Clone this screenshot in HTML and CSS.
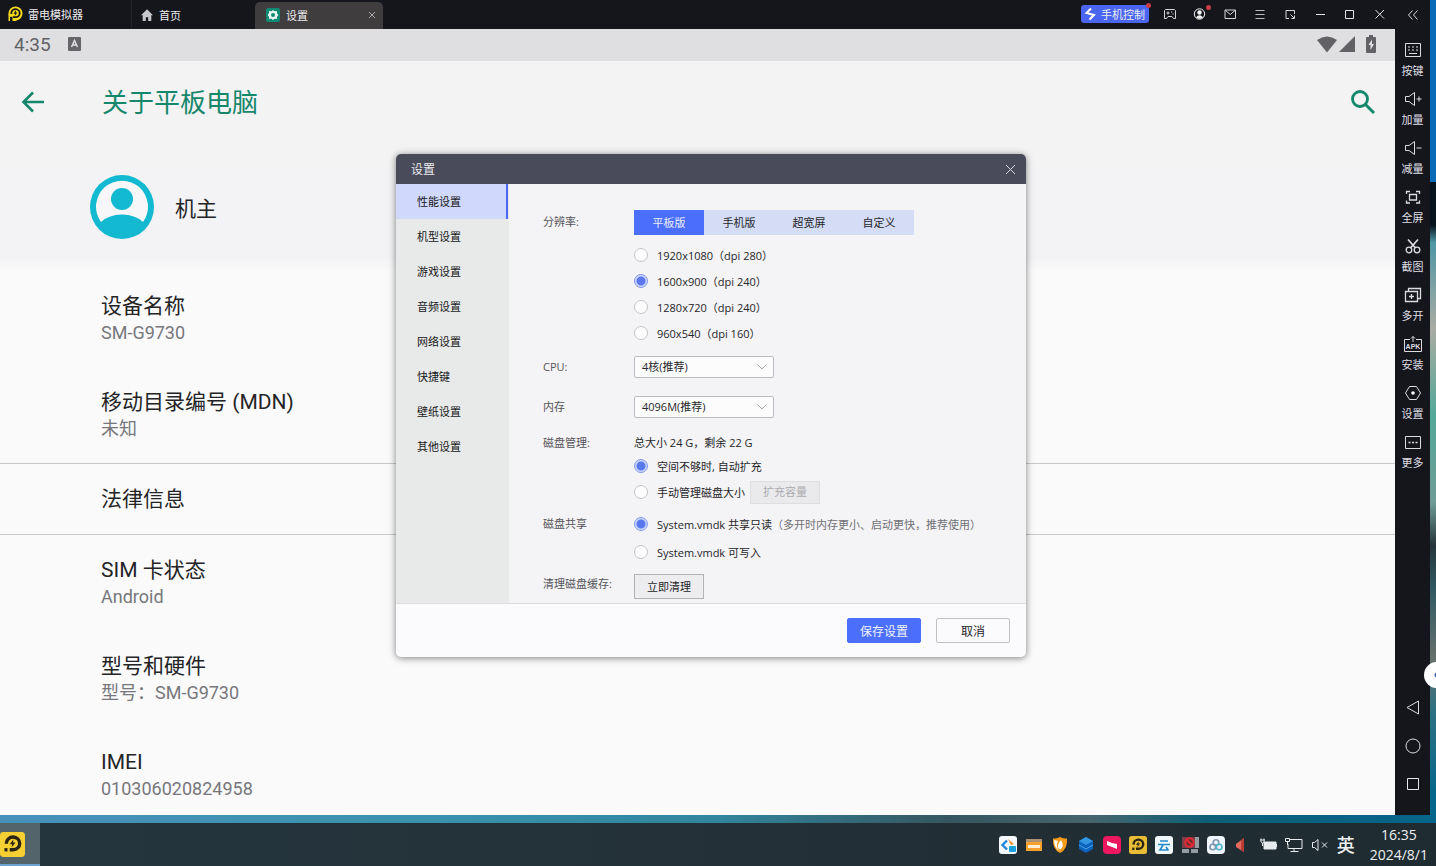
FILE: index.html
```html
<!DOCTYPE html>
<html lang="zh-CN">
<head>
<meta charset="utf-8">
<title>雷电模拟器</title>
<link rel="stylesheet" href="styles.css">
</head>
<body>
<svg class="defs" width="0" height="0" aria-hidden="true">
  <defs>
    <symbol id="ld" viewBox="0 0 18 18">
      <path d="M4.600 8.500V8A4.800 4.600 0 1 1 9.500 12.800H7" fill="none" stroke="currentColor" stroke-width="2.400"/>
      <path d="M9.700 5.300 7 8.800h1.800L8.300 11.200l2.900-3.600H9.400z" fill="currentColor"/>
      <path d="M3.200 11.600h2.200V14H3.200z" fill="currentColor"/>
    </symbol>
  </defs>
</svg>

<div class="desktop">
  <div class="emulator">
    <div class="main">
      <header class="titlebar">
        <div class="brand">
          <svg width="16" height="16" viewBox="0 0 16 16"><circle cx="8.500" cy="7.500" r="7" fill="#f7dc1c"/><path d="M1.500 8v7h8.500z" fill="#f7dc1c"/><path d="M4.300 8V7A4.200 4 0 1 1 8.600 11.200H6" fill="none" stroke="#17161d" stroke-width="1.800"/><path d="M9 4 6.500 7.700h1.700L7.500 10l3-3.400H8.800z" fill="#17161d"/><path d="M3 10.800h2.500V15H3z" fill="#17161d"/></svg>
          <span>雷电模拟器</span>
        </div>
        <button class="tab">
          <svg width="12" height="12" viewBox="0 0 12 12"><path d="M6 .3 0 6.300h1.700V12h3.100V8.300h2.400V12h3.100V6.300H12z" fill="#c5c5ca"/></svg>
          <span>首页</span>
        </button>
        <button class="tab tab-active">
          <svg width="14" height="14" viewBox="0 0 14 14"><rect width="14" height="14" rx="2" fill="#0f8b74"/><path d="M7 2 8.500 3.200l2.300-.1.300 2.200 1.200 1.700-1.200 1.700-.3 2.200-2.300-.1L7 12l-1.500-1.200-2.300.1-.3-2.200L1.700 7l1.200-1.700.3-2.200 2.300.1z" fill="#e9f5f2"/><circle cx="7" cy="7" r="2" fill="#0f8b74"/></svg>
          <span>设置</span>
          <svg class="tab-close" width="8" height="8" viewBox="0 0 8 8"><path d="M1 1l6 6M7 1 1 7" stroke="#aaa" fill="none"/></svg>
        </button>
        <div class="window-tools">
          <button class="phone-control">
            <svg width="13" height="14" viewBox="0 0 13 14"><path d="M7 1.500 2.500 6 10 8 5.500 12.500" fill="none" stroke="#fff" stroke-width="2"/></svg>
            <span>手机控制</span><i class="dot"></i>
          </button>
          <button class="tool" aria-label="手柄"><svg width="14" height="14" viewBox="0 0 14 14"><path d="M2.500 2.500h9l1 1v8h-2l-1.500-2h-4l-1.500 2h-2v-8zM3.500 6h3M5 4.500v3M8 5h1.200M9.500 7h1.200" fill="none" stroke="#d6d6da"/></svg></button>
          <button class="tool" aria-label="账号"><svg width="14" height="14" viewBox="0 0 14 14"><circle cx="6.500" cy="7" r="5.200" fill="none" stroke="#f4f4f4"/><circle cx="6.500" cy="5.500" r="2.200" fill="#f4f4f4"/><path d="M3 10.200q3.500-4 7 0-3.500 3-7 0z" fill="#f4f4f4"/></svg><i class="dot"></i></button>
          <button class="tool" aria-label="消息"><svg width="14" height="14" viewBox="0 0 14 14"><path d="M2 3h10.500v8.500H2zM2.500 3.500l4.800 4L12 3.500" fill="none" stroke="#d6d6da"/></svg></button>
          <button class="tool" aria-label="菜单"><svg width="14" height="14" viewBox="0 0 14 14"><path d="M2.500 3.500h9M2.500 7.500h9M2.500 11.500h9" stroke="#b9b9be"/></svg></button>
          <button class="tool" aria-label="小窗"><svg width="14" height="14" viewBox="0 0 14 14"><path d="M6 11.500H3v-8h8.500V7M7.500 7.500 11 11M11.500 8.500v3h-3" fill="none" stroke="#d6d6da"/></svg></button>
          <button class="tool" aria-label="最小化"><svg width="14" height="14" viewBox="0 0 14 14"><path d="M3 7.500h9" stroke="#e4e4e4"/></svg></button>
          <button class="tool" aria-label="最大化"><svg width="14" height="14" viewBox="0 0 14 14"><path d="M2.500 3.500h8v8h-8z" fill="none" stroke="#e4e4e4"/></svg></button>
          <button class="tool" aria-label="关闭"><svg width="14" height="14" viewBox="0 0 14 14"><path d="m2.500 3 8.500 8.500m0-8.500-8.500 8.500" stroke="#e4e4e4"/></svg></button>
        </div>
      </header>

      <div class="android">
        <div class="statusbar">
          <span>4:35</span>
          <svg width="14" height="14" viewBox="0 0 14 14"><rect width="13" height="14" rx="1" fill="#66666a"/><path d="m3.500 10 3-6.500 3 6.500M4.600 8h3.800" fill="none" stroke="#e4e3e6" stroke-width="1.400"/></svg>
          <div class="status-icons">
            <svg width="20" height="17" viewBox="0 0 20 17"><path d="M0 4q10-7 20 0L10 16.500z" fill="#626266"/></svg>
            <svg width="17" height="17" viewBox="0 0 17 17"><path d="M16 0v16H0z" fill="#626266"/></svg>
            <svg width="10" height="18" viewBox="0 0 10 18"><path d="M3 0h4v2h2q1 0 1 1v14q0 1-1 1H1q-1 0-1-1V3q0-1 1-1h2z" fill="#626266"/><path d="M6 4.500 2.500 10h2V15L8 9H6z" fill="#e2e1e4"/></svg>
          </div>
        </div>
        <div class="appbar">
          <button class="plain" aria-label="返回"><svg width="24" height="24" viewBox="0 0 24 24"><path d="M23 12H3M12 2.500 2.500 12l9.500 9.500" fill="none" stroke="#15876b" stroke-width="2.600"/></svg></button>
          <h1>关于平板电脑</h1>
          <button class="plain" aria-label="搜索"><svg width="26" height="26" viewBox="0 0 26 26"><circle cx="10" cy="10" r="7.500" fill="none" stroke="#15876b" stroke-width="2.800"/><path d="m15.500 15.500 8.500 8.500" stroke="#15876b" stroke-width="3"/></svg></button>
        </div>
        <div class="owner">
          <svg width="64" height="64" viewBox="0 0 64 64"><circle cx="32" cy="32" r="32" fill="#12b9d1"/><path d="M11 47A26 26 0 1 1 53 47Q45 39.500 32 39.500T11 47z" fill="#f7f6f8"/><circle cx="32" cy="24" r="11" fill="#12b9d1"/></svg>
          <span>机主</span>
        </div>
        <dl class="about">
          <div><dt>设备名称</dt><dd>SM-G9730</dd></div>
          <div><dt>移动目录编号 (MDN)</dt><dd>未知</dd></div>
          <div class="ruled"><dt>法律信息</dt></div>
          <div><dt>SIM 卡状态</dt><dd>Android</dd></div>
          <div><dt>型号和硬件</dt><dd>型号：SM-G9730</dd></div>
          <div><dt>IMEI</dt><dd>010306020824958</dd></div>
        </dl>
      </div>
    </div>

    <aside class="sidebar">
      <button class="collapse" aria-label="收起"><svg width="12" height="12" viewBox="0 0 12 12"><path d="M5.500 1.500 1.500 6l4 4.500M10.500 1.500 6.500 6l4 4.500" fill="none" stroke="#d6d6da"/></svg></button>
      <nav class="tools">
        <button><svg width="18" height="18" viewBox="0 0 18 18"><path d="M1.500 2.500h15v13h-15zM4 6h2M8 6h2M12 6h2M4 9h2M8 9h2M12 9h2M5 12.500h8" fill="none" stroke="#dcdce0"/></svg><span>按键</span></button>
        <button><svg width="18" height="18" viewBox="0 0 18 18"><path d="M1.500 6.500H5l5.500-4v13L5 11.500H1.500zM12.500 9h5M15 6.500v5" fill="none" stroke="#dcdce0"/></svg><span>加量</span></button>
        <button><svg width="18" height="18" viewBox="0 0 18 18"><path d="M1.500 6.500H5l5.500-4v13L5 11.500H1.500zM12.500 9h5" fill="none" stroke="#dcdce0"/></svg><span>减量</span></button>
        <button><svg width="18" height="18" viewBox="0 0 18 18"><path d="M2.500 6V3.500H6M12 3.500h3.500V6M15.500 12.500V15H12M6 15H2.500v-2.500M5.500 6.500h7v5.500h-7z" fill="none" stroke="#dcdce0" stroke-width="1.300"/></svg><span>全屏</span></button>
        <button><svg width="18" height="18" viewBox="0 0 18 18"><path d="m4 2.500 7.500 8.500M14 2.500 6.500 11" stroke="#dcdce0" stroke-width="1.700"/><circle cx="5" cy="13" r="2.800" fill="none" stroke="#dcdce0" stroke-width="1.300"/><circle cx="13" cy="13" r="2.800" fill="none" stroke="#dcdce0" stroke-width="1.300"/></svg><span>截图</span></button>
        <button><svg width="18" height="18" viewBox="0 0 18 18"><path d="M1.500 5.500h12v10h-12zM4.500 5V2.500h12v10H14M5 10.500h5M7.500 8v5" fill="none" stroke="#dcdce0" stroke-width="1.300"/></svg><span>多开</span></button>
        <button><svg width="20" height="18" viewBox="0 0 20 18"><path d="M7 4.500H1.500v12h17v-12H13M10 7V1.500M8 3.500l2-2 2 2" fill="none" stroke="#dcdce0"/><text x="10" y="14" text-anchor="middle" class="apk">APK</text></svg><span>安装</span></button>
        <button><svg width="18" height="18" viewBox="0 0 18 18"><path d="M5.500 2.500h7l4 6.500-4 6.500h-7L1.500 9z" fill="none" stroke="#dcdce0"/><circle cx="9" cy="9" r="1.800" fill="#fff"/></svg><span>设置</span></button>
        <button><svg width="18" height="18" viewBox="0 0 18 18"><path d="M1.500 3.500h15v12h-15z" fill="none" stroke="#dcdce0"/><path d="M4.500 9.500h2M8 9.500h2M11.500 9.500h2" stroke="#dcdce0" stroke-width="1.500"/></svg><span>更多</span></button>
      </nav>
      <nav class="keys">
        <button aria-label="返回"><svg width="16" height="16" viewBox="0 0 16 16"><path d="M13.500 1v13L2 7.500z" fill="none" stroke="#dcdce0"/></svg></button>
        <button aria-label="主页"><svg width="16" height="16" viewBox="0 0 16 16"><circle cx="8" cy="8" r="7" fill="none" stroke="#dcdce0"/></svg></button>
        <button aria-label="最近任务"><svg width="16" height="16" viewBox="0 0 16 16"><path d="M2.500 2.500h11v11h-11z" fill="none" stroke="#e8e8ea"/></svg></button>
      </nav>
    </aside>

    <section class="dialog" role="dialog" aria-label="设置">
      <div class="dialog-title"><span>设置</span><button class="plain" aria-label="关闭"><svg width="11" height="11" viewBox="0 0 11 11"><path d="m1 1 9 9m0-9-9 9" stroke="#d8d9de"/></svg></button></div>
      <div class="dialog-body">
        <nav class="categories">
          <button class="current">性能设置</button>
          <button>机型设置</button>
          <button>游戏设置</button>
          <button>音频设置</button>
          <button>网络设置</button>
          <button>快捷键</button>
          <button>壁纸设置</button>
          <button>其他设置</button>
        </nav>
        <form class="form">
          <div class="row">
            <span class="label tall">分辨率:</span>
            <div>
              <div class="segments">
                <button type="button" class="on">平板版</button><button type="button">手机版</button><button type="button">超宽屏</button><button type="button">自定义</button>
              </div>
              <div class="options">
                <label><input type="radio" name="res">1920x1080（dpi 280）</label>
                <label><input type="radio" name="res" checked>1600x900（dpi 240）</label>
                <label><input type="radio" name="res">1280x720（dpi 240）</label>
                <label><input type="radio" name="res">960x540（dpi 160）</label>
              </div>
            </div>
          </div>
          <div class="row cpu">
            <label class="label" for="cpu">CPU:</label>
            <select id="cpu"><option>4核(推荐)</option></select>
          </div>
          <div class="row memory">
            <label class="label" for="mem">内存</label>
            <select id="mem"><option>4096M(推荐)</option></select>
          </div>
          <div class="row disk">
            <span class="label">磁盘管理:</span>
            <div>
              <p>总大小 24 G，剩余 22 G</p>
              <label><input type="radio" name="disk" checked>空间不够时, 自动扩充</label>
              <div class="inline"><label><input type="radio" name="disk">手动管理磁盘大小</label><button type="button" class="small" disabled>扩充容量</button></div>
            </div>
          </div>
          <div class="row share">
            <span class="label">磁盘共享</span>
            <div class="share-options">
              <label><input type="radio" name="share" checked>System.vmdk 共享只读<small>（多开时内存更小、启动更快，推荐使用）</small></label>
              <label><input type="radio" name="share">System.vmdk 可写入</label>
            </div>
          </div>
          <div class="row">
            <span class="label">清理磁盘缓存:</span>
            <div><button type="button" class="small">立即清理</button></div>
          </div>
        </form>
      </div>
      <footer class="dialog-footer">
        <button class="save">保存设置</button>
        <button class="cancel">取消</button>
      </footer>
    </section>
  </div>

  <div class="bubble"></div>

  <footer class="taskbar">
    <button class="task" aria-label="雷电模拟器"><svg width="25" height="25" viewBox="0 0 18 18"><rect width="18" height="18" rx="2.500" fill="#f6cf33"/><g color="#2c2413"><use href="#ld" width="18" height="18"/></g></svg></button>
    <div class="tray">
      <svg width="18" height="18" viewBox="0 0 18 18"><rect width="18" height="18" rx="3" fill="#f4f8fc"/><path d="M8 4.500 3.500 9 8 13.500" fill="none" stroke="#1f87dc" stroke-width="2.400"/><path d="m9 3 6 5-3 1z" fill="#f08a2b"/><rect x="10" y="10" width="7" height="6" rx="1" fill="#1ba2de"/></svg>
      <svg width="18" height="18" viewBox="0 0 18 18"><path d="M1 3h16v3H1z" fill="#ad9272"/><path d="M1 6h16v9H1z" fill="#f5a12c"/><path d="M3 9h12v3H3z" fill="#fff0d5"/></svg>
      <svg width="18" height="18" viewBox="0 0 18 18"><path d="M9 1q4 2 7 1.500Q17 13 9 17 1 13 2 2.500 5 3 9 1z" fill="#f59a1b"/><path d="M10 4q4 7-1 9.500Q4 11 10 4zM3 4q0 8 6 11.500Q4 11 7 5z" fill="#fff"/></svg>
      <svg width="18" height="18" viewBox="0 0 18 18"><path d="m9 1 7 4v8l-7 4-7-4V5z" fill="#0b62ba"/><path d="m9 1 7 4-7 4-7-4z" fill="#3496e0"/><path d="m2 9 7 4 7-4" fill="none" stroke="#49a5e8"/></svg>
      <svg width="18" height="18" viewBox="0 0 18 18"><rect width="18" height="18" rx="4" fill="#eb185f"/><path d="m4 5 5 2v4l-5-2zM9 7l5 1v5l-5-2z" fill="#fff"/></svg>
      <svg width="18" height="18" viewBox="0 0 18 18"><rect width="18" height="18" rx="2.500" fill="#e8bd35"/><g color="#2c2413"><use href="#ld" width="18" height="18"/></g></svg>
      <svg width="18" height="18" viewBox="0 0 18 18"><rect width="18" height="18" rx="3" fill="#f1f8fc"/><path d="M5 5h8M3 8.500h12M8 9l-3 5h8M11 11l2.500 3.500" fill="none" stroke="#258bc9" stroke-width="1.700"/></svg>
      <svg width="18" height="18" viewBox="0 0 18 18"><path d="M1 1h16v11H1z" fill="#7c3d49"/><path d="M14 1h4v11h-4zM1 13h7v4H1zM10 13h7v4h-7z" fill="#949ba1"/><circle cx="8.500" cy="6.500" r="4.200" fill="#6e2830" stroke="#e22b33" stroke-width="2"/><path d="m5.500 3.500 6 6" stroke="#e22b33" stroke-width="2"/></svg>
      <svg width="18" height="18" viewBox="0 0 18 18"><rect width="18" height="18" rx="4" fill="#f0f5f9"/><g fill="none" stroke="#8095ad" stroke-width="1.600"><circle cx="9" cy="6.500" r="2.800"/><circle cx="5.800" cy="11" r="2.800"/><circle cx="12.200" cy="11" r="2.800" stroke="#4eb4cb"/></g></svg>
      <svg width="18" height="18" viewBox="0 0 18 18"><path d="M3 8 11 2v14L3 11z" fill="#e66a5c"/><path d="M8 4.500 11 2v14l-3-2z" fill="#b83b35"/></svg>
      <svg width="18" height="18" viewBox="0 0 18 18"><path d="M5 6h12v7H5zM17.500 8v3" fill="#e6ebed" stroke="#e6ebed"/><path d="M1 4h5M2 2.500V6q1.500 2 3 0V2.500M3.500 7v3" fill="none" stroke="#e6ebed"/></svg>
      <svg width="18" height="18" viewBox="0 0 18 18"><path d="M5 3.500h12v9H3V8M9 13v3M5.500 15.500h8M.500 2.500h4v3h-4zM2.500 5.500V9" fill="none" stroke="#e6ebed"/></svg>
      <svg width="18" height="18" viewBox="0 0 18 18"><path d="M1.500 6.500h2L7 3.500v11l-3.500-3h-2zM11 6.500l5 5M16 6.500l-5 5" fill="none" stroke="#e6ebed"/></svg>
      <span class="ime">英</span>
    </div>
    <time class="clock"><span>16:35</span><span>2024/8/1</span></time>
  </footer>
</div>
</body>
</html>
```

FILE: styles.css
```css
* { box-sizing: border-box; }

body {
  margin: 0;
  font-family: "Open Sans", "Noto Sans CJK SC", sans-serif;
  font-size: 11px;
  color: #26262a;
}

.defs { position: absolute; }

button, select, input { font: inherit; color: inherit; margin: 0; }

button {
  border: 0;
  padding: 0;
  background: none;
  white-space: nowrap;
}

svg { display: block; flex: none; }

.desktop {
  position: relative;
  height: 100vh;
  display: flex;
  flex-direction: column;
  overflow: hidden;
  background: linear-gradient(#0a6bb8 0 21%, #07131d 21% 26%, #4f97a5 28%, #a9aba2 38%, #53a898 48%, #6f9c97 58%, #27363c 63%, #315962 68%, #66716c 76%, #2f7183 82%, #04678b 92%);
}

/* Emulator window */
.emulator {
  position: relative;
  flex: 1;
  min-height: 0;
  display: flex;
  margin: 0 6px 8px 0;
}

.desktop::before {
  content: "";
  position: absolute;
  left: 0;
  right: 0;
  bottom: 43px;
  height: 8px;
  background: linear-gradient(90deg, #4791ba, #3a92ac 30%, #31859d 50%, #36565f 66%, #46656d 76%, #0e6077 84%, #06658b);
}

.main {
  flex: 1;
  min-width: 0;
  display: flex;
  flex-direction: column;
}

.titlebar {
  flex: none;
  height: 29px;
  display: flex;
  align-items: stretch;
  background: #15151c;
  color: #ededf0;
}

.brand {
  width: 131px;
  display: flex;
  align-items: center;
  gap: 5px;
  padding: 0 0 2px 7px;
}

.tab {
  width: 124px;
  display: flex;
  align-items: center;
  gap: 6px;
  padding-left: 9px;
  border-left: 1px solid #23232a;
}

.tab-active {
  width: 128px;
  margin-top: 2px;
  padding: 0 7px 2px 11px;
  border: 0;
  border-radius: 5px 5px 0 0;
  background: #403d3f;
}

.tab-close { margin-left: auto; }

.window-tools {
  margin-left: auto;
  display: flex;
  align-items: center;
  padding-bottom: 2px;
}

.phone-control {
  position: relative;
  width: 68px;
  height: 18px;
  display: flex;
  align-items: center;
  gap: 4px;
  margin-right: 6px;
  padding-left: 3px;
  border-radius: 3px;
  background: #4a66f0;
}

.dot {
  position: absolute;
  top: -2px;
  right: -2px;
  width: 5px;
  height: 5px;
  border-radius: 50%;
  background: #cc3a43;
}

.tool {
  position: relative;
  width: 30px;
  height: 18px;
  display: grid;
  place-items: center;
}

.tool .dot { top: 0; right: 4px; }

/* Android screen */
.android {
  flex: 1;
  min-height: 0;
  display: flex;
  flex-direction: column;
  overflow: hidden;
  background: #fafafb;
  font-family: Roboto, "Noto Sans CJK SC", sans-serif;
  color: #242426;
}

.statusbar {
  flex: none;
  height: 32px;
  display: flex;
  align-items: center;
  gap: 17px;
  padding: 0 19px 2px 14px;
  background: #dfdee1;
  color: #626266;
  font-size: 19px;
}

.status-icons {
  margin-left: auto;
  display: flex;
  align-items: center;
  gap: 2px;
}

.status-icons svg:last-child { margin-left: 8px; }

.appbar {
  flex: none;
  height: 84px;
  display: flex;
  align-items: center;
  padding: 0 19px 2px 21px;
  background: #f3f3f4;
}

.appbar h1 {
  flex: 1;
  margin: 0 0 0 57px;
  padding-bottom: 3px;
  font-size: 26px;
  font-weight: 400;
  color: #15876b;
}

.owner {
  flex: none;
  height: 126px;
  display: flex;
  align-items: center;
  gap: 21px;
  padding: 0 0 2px 90px;
  background: linear-gradient(#f3f3f4, #f3f2f5 90%, #fafafb);
  font-size: 21px;
}

.about { margin: 0; }

.about > div {
  padding: 21px 101px;
}

.about .ruled {
  border-top: 1px solid #c9c8cb;
  border-bottom: 1px solid #c9c8cb;
}

dt { font-size: 21px; line-height: 28px; }

dd {
  margin: 0;
  font-size: 18px;
  line-height: 26px;
  color: #77777b;
}

/* Tool column */
.sidebar {
  flex: none;
  width: 35px;
  display: flex;
  flex-direction: column;
  background: #15151c;
  color: #dfdfe3;
}

.collapse {
  height: 29px;
  display: grid;
  place-items: center;
}

.tools {
  display: flex;
  flex-direction: column;
  gap: 12px;
  padding-top: 12px;
}

.tools button {
  display: flex;
  flex-direction: column;
  align-items: center;
  gap: 5px;
  line-height: 14px;
}

.apk {
  font-family: "Liberation Sans", sans-serif;
  font-size: 7px;
  font-weight: 700;
  fill: #dcdce0;
}

.keys {
  margin-top: auto;
  display: flex;
  flex-direction: column;
  align-items: center;
  gap: 22px;
  padding-bottom: 23px;
}

.bubble {
  position: absolute;
  right: -14px;
  bottom: 178px;
  width: 26px;
  height: 26px;
  border-radius: 50%;
  background: radial-gradient(circle, #3b5fc4 2px, #fff 3px);
}

/* Settings dialog, floating over the screen */
.dialog {
  position: absolute;
  left: 396px;
  top: 154px;
  width: 630px;
  display: flex;
  flex-direction: column;
  border-radius: 5px;
  background: #fbfafd;
  box-shadow: 0 1px 7px rgba(0, 0, 0, 0.5);
  overflow: hidden;
}

.dialog-title {
  height: 30px;
  display: flex;
  align-items: center;
  justify-content: space-between;
  padding: 0 10px 0 15px;
  background: #4a4b5a;
  color: #ececf0;
  font-size: 12px;
}

.dialog-body {
  display: flex;
  background: #f4f3f5;
  border-bottom: 1px solid #dddce0;
}

.categories {
  width: 113px;
  flex: none;
  display: flex;
  flex-direction: column;
  background: #e8eae9;
}

.categories button {
  height: 35px;
  padding: 0 0 2px 21px;
  text-align: left;
  color: #17171a;
}

.categories .current {
  margin-right: 1px;
  background: #d0d8fc;
  border-right: 2px solid #4a66f0;
}

.form {
  flex: 1;
  padding: 26px 34px 4px;
}

.row {
  display: grid;
  grid-template-columns: 91px 1fr;
}

.label { color: #55555a; line-height: 20px; }

.label.tall { line-height: 24px; }

.segments { display: flex; }

.segments button {
  width: 70px;
  height: 25px;
  padding-bottom: 2px;
  background: #d5ddf6;
}

.segments .on { background: #4c6ffb; color: #e8edff; }

.options { padding-top: 7px; }

.row div > label {
  display: flex;
  align-items: center;
  height: 26px;
  white-space: nowrap;
}

input[type="radio"] {
  appearance: none;
  flex: none;
  width: 14px;
  height: 14px;
  margin-right: 9px;
  border: 1px solid #c4c4c8;
  border-radius: 50%;
  background: #fdfdfe;
}

input[type="radio"]:checked {
  border-color: #7f98f3;
  background: radial-gradient(circle, #5a78ee 4px, #ced7fb 5px);
}

select {
  appearance: none;
  width: 140px;
  height: 22px;
  padding: 0 7px 2px;
  border: 1px solid #bdbdc1;
  border-radius: 2px;
  background: #fcfcfd url("data:image/svg+xml,%3Csvg xmlns='http://www.w3.org/2000/svg' width='10' height='6'%3E%3Cpath d='M.5.500 5 5 9.500.500' fill='none' stroke='%23aaaaae'/%3E%3C/svg%3E") no-repeat right 6px center;
}

.cpu { padding-top: 10px; }

.memory { padding-top: 18px; }

.cpu .label,
.memory .label { line-height: 22px; }

.disk { padding-top: 15px; }

.disk p { margin: 0; line-height: 20px; }

.inline { display: flex; gap: 5px; align-items: center; }

.small {
  width: 70px;
  height: 25px;
  padding-bottom: 2px;
  border: 1px solid #b2b2b6;
  background: #ededef;
}

.small:disabled {
  height: 23px;
  border-color: #dedee1;
  background: #eaeaec;
  color: #acacb0;
}

.share { padding: 6px 0 9px; }

.share-options {
  display: grid;
  gap: 2px;
}

.share .label { line-height: 26px; }

small { font-size: 11px; color: #717176; }

.dialog-footer {
  height: 53px;
  display: flex;
  justify-content: flex-end;
  align-items: center;
  gap: 15px;
  padding-right: 16px;
  font-size: 12px;
}

.dialog-footer button {
  width: 74px;
  height: 25px;
  border: 1px solid #c0c0c5;
  border-radius: 2px;
}

.dialog-footer .save {
  border-color: #4c6ffb;
  background: #4c6ffb;
  color: #f0f3ff;
}

/* Desktop taskbar */
.taskbar {
  flex: none;
  height: 43px;
  display: flex;
  align-items: center;
  background: linear-gradient(90deg, #25363e, #232f36 60%, #1e2b30);
  color: #eef1f2;
}

.task {
  width: 40px;
  height: 43px;
  padding-top: 2px;
  border-bottom: 2px solid #6ba3d3;
  background: #53646b;
}

.tray {
  margin-left: auto;
  display: flex;
  align-items: center;
  gap: 8px;
}

.ime { font-size: 18px; line-height: 24px; font-weight: 500; }

.clock {
  display: grid;
  justify-items: center;
  margin-left: 15px;
  padding-right: 8px;
  font-size: 14px;
  line-height: 20px;
}
```
